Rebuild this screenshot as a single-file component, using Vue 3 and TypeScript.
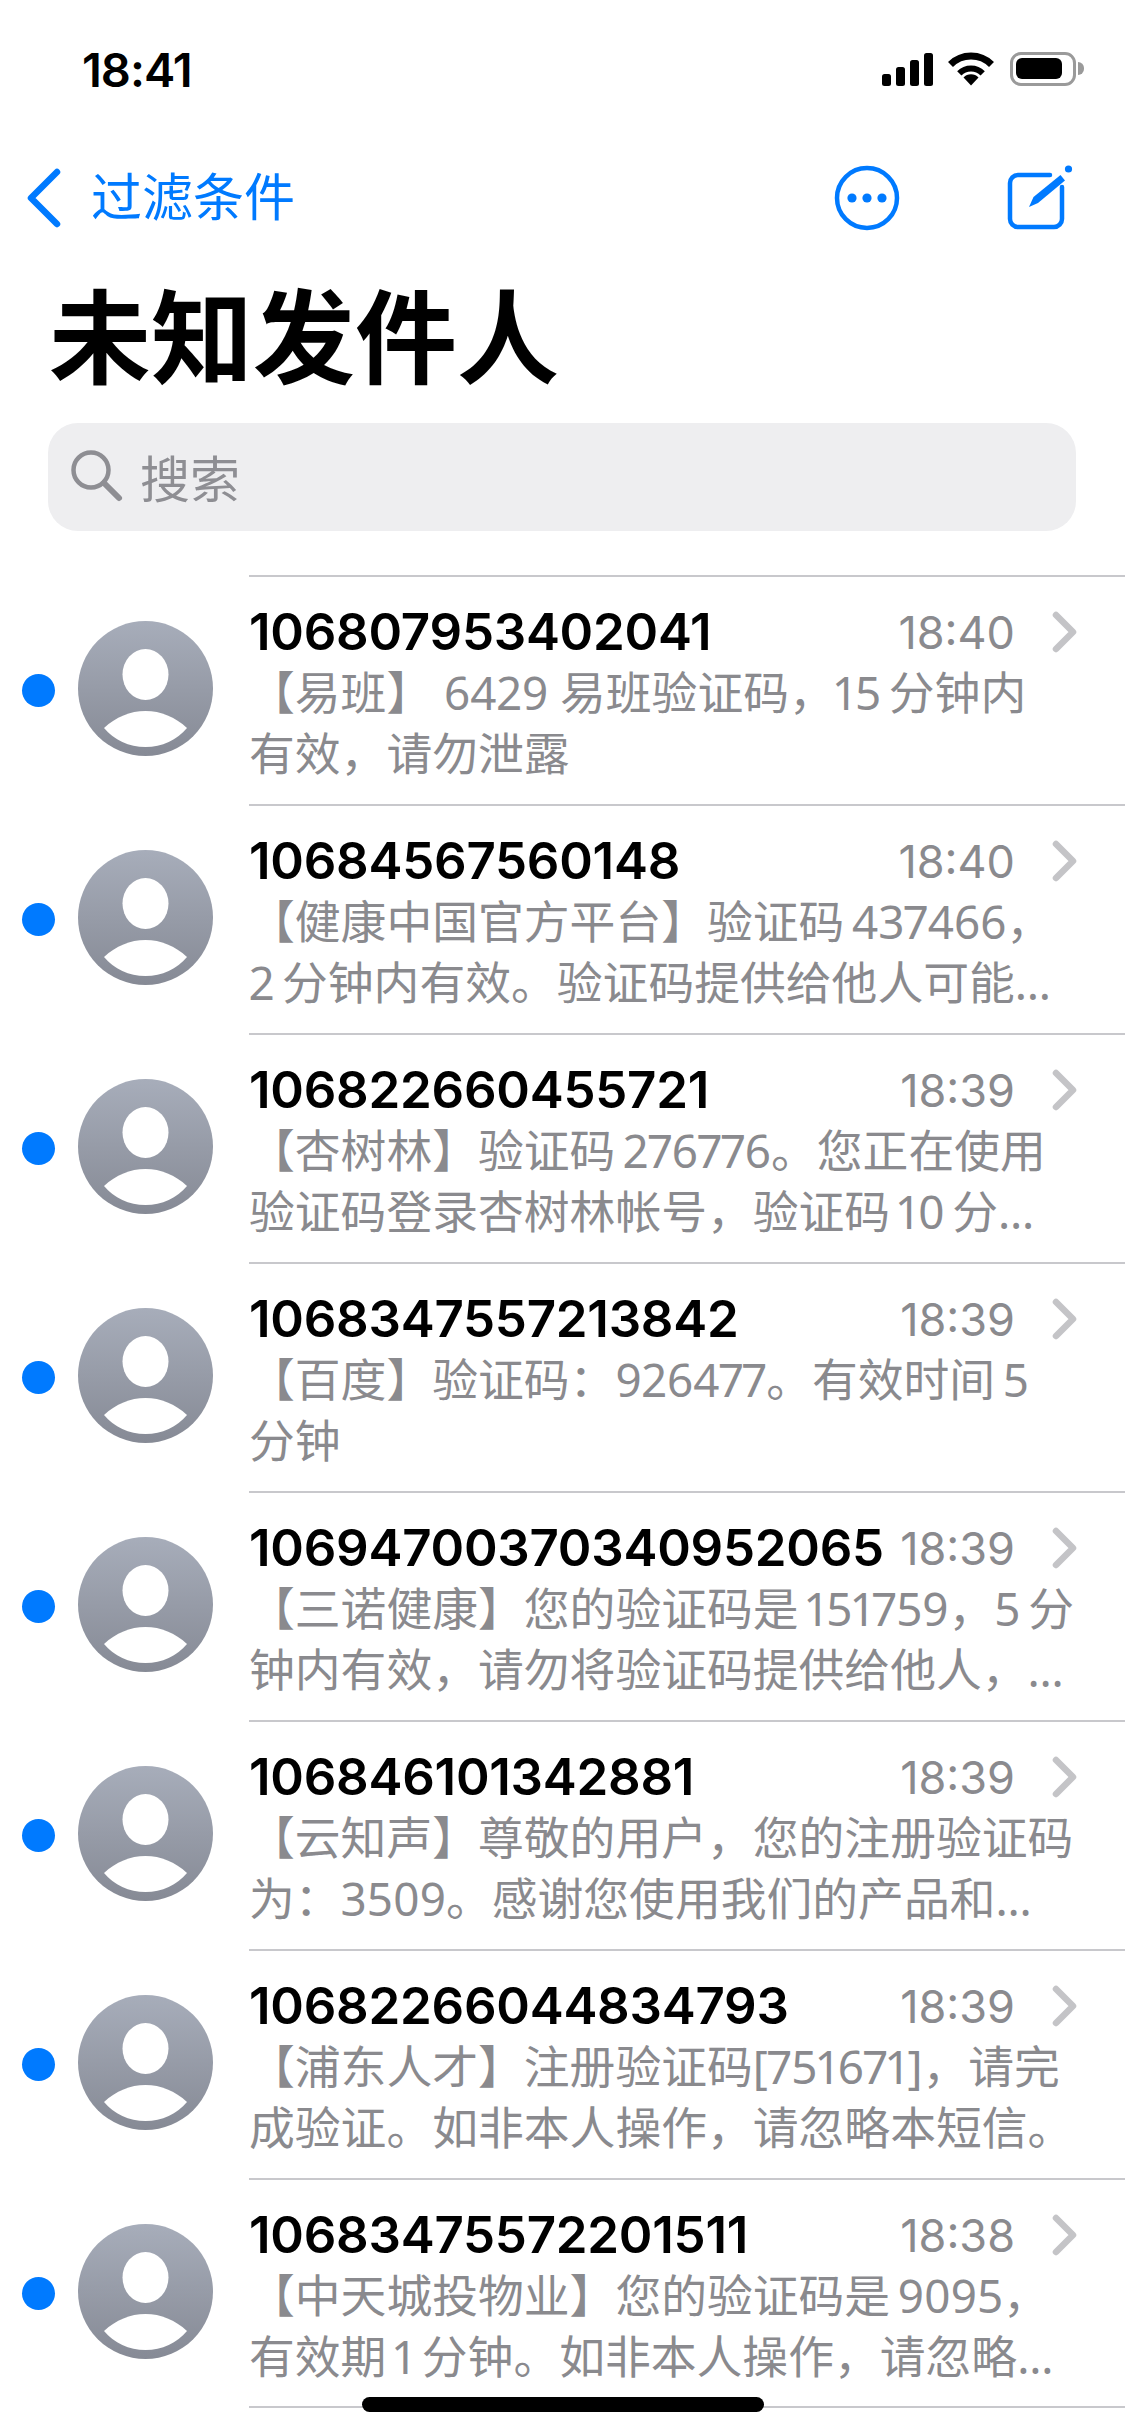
<template>
  <div class="screen">
    <header class="status">
      <span class="clock">18:41</span>
      <div class="status-icons">
        <svg width="51" height="33" viewBox="0 0 51 33" fill="#000">
          <rect x="0" y="21" width="9" height="12" rx="2.5" />
          <rect x="14" y="14" width="9" height="19" rx="2.5" />
          <rect x="28" y="7" width="9" height="26" rx="2.5" />
          <rect x="42" y="0" width="9" height="33" rx="2.5" />
        </svg>
        <svg class="wifi" width="46" height="34" viewBox="0 0 46 34" fill="none" stroke="#000">
          <path d="M2.5 12.5A29 29 0 0 1 43.5 12.5" stroke-width="7" />
          <path d="M11.3 21.3A16.5 16.5 0 0 1 34.7 21.3" stroke-width="6" />
          <path d="M23 33.5L15.5 25.5A10.5 10.5 0 0 1 30.5 25.5Z" fill="#000" stroke="none" />
        </svg>
        <div class="battery">
          <div class="battery-level"></div>
          <div class="battery-nub"></div>
        </div>
      </div>
    </header>

    <nav class="nav">
      <div class="back">
        <svg width="40" height="62" viewBox="0 0 40 62" fill="none" stroke="#007aff" stroke-width="6.5" stroke-linecap="round" stroke-linejoin="round">
          <path d="M32 5L6 31L32 57" />
        </svg>
        <span>过滤条件</span>
      </div>
      <div class="actions">
        <svg width="70" height="70" viewBox="0 0 70 70" fill="none">
          <circle cx="35" cy="35" r="30" stroke="#007aff" stroke-width="4.5" />
          <circle cx="20" cy="35" r="4.6" fill="#007aff" />
          <circle cx="35" cy="35" r="4.6" fill="#007aff" />
          <circle cx="50" cy="35" r="4.6" fill="#007aff" />
        </svg>
        <svg width="72" height="72" viewBox="0 0 72 72" fill="none">
          <path d="M46 13H14a8 8 0 0 0-8 8V57a8 8 0 0 0 8 8H50a8 8 0 0 0 8-8V25" stroke="#007aff" stroke-width="4.5" stroke-linecap="round" />
          <path d="M25 45L29.5 35L56.5 13L61 18.5L34 41Z" fill="#007aff" />
          <circle cx="64.5" cy="7" r="3.6" fill="#007aff" />
        </svg>
      </div>
    </nav>

    <h1 class="title">未知发件人</h1>

    <div class="search">
      <svg width="54" height="54" viewBox="0 0 54 54" fill="none" stroke="#8e8e93" stroke-linecap="round">
        <circle cx="21" cy="21" r="17.5" stroke-width="4.5" />
        <path d="M34 34L49 49" stroke-width="6" />
      </svg>
      <span>搜索</span>
    </div>

    <ul class="list">
      <li v-for="msg in messages" :key="msg.sender" class="row">
        <span class="dot"></span>
        <svg class="avatar" width="135" height="135" viewBox="0 0 135 135">
          <defs>
            <linearGradient id="avatar-fill" x1="0" y1="0" x2="0" y2="1">
              <stop offset="0" stop-color="#a7adba" />
              <stop offset="1" stop-color="#868a95" />
            </linearGradient>
          </defs>
          <circle cx="67.5" cy="67.5" r="67.5" fill="url(#avatar-fill)" />
          <ellipse cx="67.5" cy="53.5" rx="23" ry="25.5" fill="#fff" />
          <path d="M26 107C38 96 52 90 67.5 90C83 90 97 96 109 107C99 119 84 126 67.5 126C51 126 36 119 26 107Z" fill="#fff" />
        </svg>
        <div class="body">
          <div class="head">
            <span class="sender">{{ msg.sender }}</span>
            <span class="time">{{ msg.time }}</span>
            <svg class="more" width="27" height="42" viewBox="0 0 27 42" fill="none" stroke="#c4c4c7" stroke-width="6.5" stroke-linecap="round" stroke-linejoin="round">
              <path d="M5 4L22 21L5 38" />
            </svg>
          </div>
          <p v-for="line in msg.lines" :key="line" class="preview">{{ line }}</p>
        </div>
      </li>
    </ul>

    <div class="home-bar"></div>
  </div>
</template>

<script setup lang="ts">
interface Message {
  sender: string
  time: string
  lines: string[]
}

const messages: Message[] = [
  { sender: '106807953402041', time: '18:40', lines: ['【易班】 6429 易班验证码，15\u2009分钟内', '有效，请勿泄露'] },
  { sender: '10684567560148', time: '18:40', lines: ['【健康中国官方平台】验证码\u2009437466，', '2\u2009分钟内有效。验证码提供给他人可能…'] },
  { sender: '106822660455721', time: '18:39', lines: ['【杏树林】验证码\u2009276776。您正在使用', '验证码登录杏树林帐号，验证码\u200910\u2009分…'] },
  { sender: '1068347557213842', time: '18:39', lines: ['【百度】验证码：926477。有效时间\u20095', '分钟'] },
  { sender: '10694700370340952065', time: '18:39', lines: ['【三诺健康】您的验证码是\u2009151759，5\u2009分', '钟内有效，请勿将验证码提供给他人，…'] },
  { sender: '106846101342881', time: '18:39', lines: ['【云知声】尊敬的用户，您的注册验证码', '为：3509。感谢您使用我们的产品和…'] },
  { sender: '10682266044834793', time: '18:39', lines: ['【浦东人才】注册验证码[751671]，请完', '成验证。如非本人操作，请忽略本短信。'] },
  { sender: '10683475572201511', time: '18:38', lines: ['【中天城投物业】您的验证码是\u20099095，', '有效期\u20091\u2009分钟。如非本人操作，请忽略…'] },
]
</script>

<style scoped>
.screen {
  position: relative;
  width: 1125px;
  height: 2436px;
  overflow: hidden;
  background: #fff;
  font-family: Inter, "Noto Sans CJK SC", sans-serif;
}

.status {
  height: 138px;
  display: flex;
  align-items: center;
  justify-content: space-between;
  padding: 0 42px 0 82px;
}
.clock {
  font-size: 47px;
  font-weight: 600;
  letter-spacing: -1px;
  color: #000;
}
.status-icons {
  display: flex;
  align-items: center;
}
.wifi {
  margin-left: 15px;
}
.battery {
  position: relative;
  width: 66px;
  height: 34px;
  margin-left: 16px;
  margin-right: 7px;
  border: 3.5px solid #9a9a9a;
  border-radius: 11px;
  box-sizing: border-box;
  padding: 3px;
}
.battery-level {
  width: 46px;
  height: 21px;
  background: #000;
  border-radius: 6px;
}
.battery-nub {
  position: absolute;
  right: -11px;
  top: 7px;
  width: 6px;
  height: 13px;
  background: #9a9a9a;
  border-radius: 0 6px 6px 0;
}

.nav {
  height: 120px;
  display: flex;
  align-items: center;
  justify-content: space-between;
  padding: 0 49px 0 25px;
  color: #007aff;
}
.back {
  display: flex;
  align-items: center;
  gap: 26px;
  font-size: 51px;
  line-height: 60px;
}
.actions {
  display: flex;
  align-items: center;
  gap: 102px;
}

.title {
  margin: 0;
  height: 150px;
  padding-left: 49px;
  font-size: 102px;
  line-height: 148px;
  font-weight: 700;
  color: #000;
  font-family: "Noto Sans CJK SC", sans-serif;
}

.search {
  display: flex;
  align-items: center;
  gap: 16px;
  height: 108px;
  margin: 15px 49px 0 48px;
  padding-left: 22px;
  padding-bottom: 2px;
  box-sizing: border-box;
  background: #eeeef0;
  border-radius: 30px;
  color: #8e8e93;
  font-size: 50px;
}

.list {
  list-style: none;
  margin: 45px 0 0;
  padding: 0;
}
.row {
  display: flex;
  height: 229px;
}
.row:last-child .body {
  border-bottom: 2px solid #c8c8cc;
}
.dot {
  flex: none;
  width: 33px;
  height: 33px;
  margin: 98px 0 0 22px;
  border-radius: 50%;
  background: #007aff;
}
.avatar {
  flex: none;
  margin: 45px 36px 0 23px;
}
.body {
  flex: 1;
  min-width: 0;
  height: 230px;
  box-sizing: border-box;
  border-top: 2px solid #c8c8cc;
  margin-top: -1px;
  padding-top: 25px;
}
.head {
  display: flex;
  align-items: center;
  height: 60px;
  padding-right: 47px;
}
.sender {
  flex: 1;
  font-size: 51px;
  font-weight: 600;
  letter-spacing: -0.25px;
  color: #000;
  line-height: 60px;
}
.time {
  margin-top: 2px;
  font-size: 45px;
  line-height: 60px;
  color: #8a8a8e;
}
.more {
  margin-left: 36px;
}
.preview {
  margin: 0;
  font-family: "Noto Sans", "Noto Sans CJK SC", sans-serif;
  font-size: 45.8px;
  font-variant-numeric: proportional-nums;
  line-height: 61px;
  color: #8a8a8e;
  white-space: nowrap;
}

.home-bar {
  position: absolute;
  left: 362px;
  top: 2397px;
  width: 402px;
  height: 15px;
  border-radius: 8px;
  background: #000;
}
</style>
